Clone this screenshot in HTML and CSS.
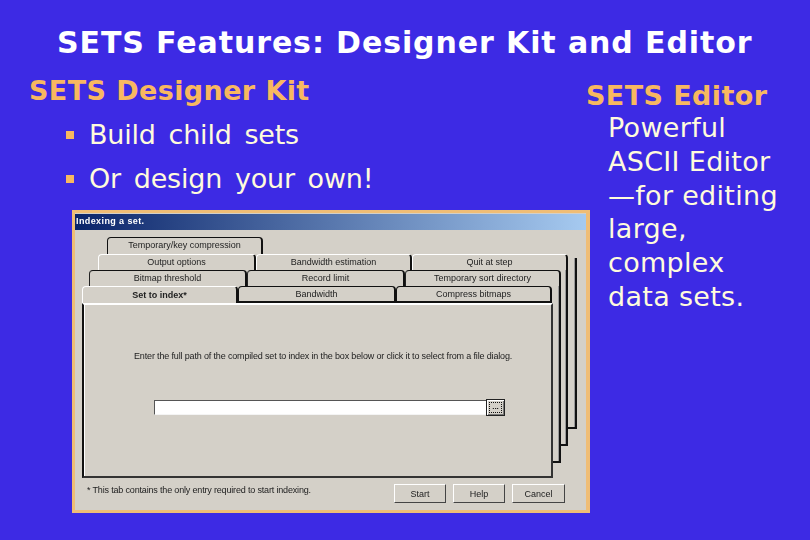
FILE: index.html
```html
<!DOCTYPE html>
<html lang="en">
<head>
<meta charset="utf-8">
<title>SETS Features</title>
<link rel="stylesheet" href="styles.css">
</head>
<body>
<main class="slide">
  <h1 class="title">SETS Features: Designer Kit and Editor</h1>
  <div class="columns">
    <section class="left">
      <h2 class="kit">SETS Designer Kit</h2>
      <ul class="bullets">
        <li>Build child sets</li>
        <li>Or design your own!</li>
      </ul>
      <div class="dialog">
        <div class="titlebar">Indexing a set.</div>
        <div class="client">
          <div class="stack">
            <div class="back b1"></div>
            <div class="back b2"></div>
            <div class="back b3"></div>
            <div class="row r1">
              <div class="tab w1">Temporary/key compression</div>
            </div>
            <div class="row r2">
              <div class="tab w2">Output options</div>
              <div class="tab w3">Bandwidth estimation</div>
              <div class="tab w3">Quit at step</div>
            </div>
            <div class="row r3">
              <div class="tab w2">Bitmap threshold</div>
              <div class="tab w4">Record limit</div>
              <div class="tab w3">Temporary sort directory</div>
            </div>
            <div class="row r4">
              <div class="tab active w3">Set to index*</div>
              <div class="tab w4">Bandwidth</div>
              <div class="tab w3">Compress bitmaps</div>
            </div>
            <div class="page">
              <p class="prompt">Enter the full path of the compiled set to index in the box below or click it to select from a file dialog.</p>
              <div class="pathrow">
                <div class="input"></div>
                <div class="browse"><span class="dots">...</span></div>
              </div>
            </div>
          </div>
          <div class="footer">
            <span class="note">* This tab contains the only entry required to start indexing.</span>
            <div class="buttons">
              <div class="btn">Start</div>
              <div class="btn">Help</div>
              <div class="btn wide">Cancel</div>
            </div>
          </div>
        </div>
      </div>
    </section>
    <section class="right">
      <h2 class="editor">SETS Editor</h2>
      <p class="desc">Powerful ASCII Editor —for editing large, complex data sets.</p>
    </section>
  </div>
</main>
</body>
</html>
```
FILE: styles.css
```css
* { box-sizing: border-box; }
html, body { margin: 0; padding: 0; }
body { width: 810px; height: 540px; overflow: hidden; background: #3d2ae4; }
.slide {
  width: 810px; height: 540px; padding-top: 23px;
  font-family: "DejaVu Sans", Verdana, sans-serif;
  color: #fffbdc;
}
.title {
  margin: 0 0 0 57px; font-size: 30px; line-height: 40px; font-weight: 700;
  color: #fff; white-space: nowrap; letter-spacing: 0.9px;
}
.columns { display: flex; margin-top: 6px; }
.left { width: 586px; flex: none; }
.kit {
  margin: 0 0 0 29px; font-size: 27px; line-height: 44px; font-weight: 700; color: #f8b860; white-space: nowrap; letter-spacing: 0.4px;
}
.bullets { list-style: none; margin: 0; padding: 0 0 0 66px; }
.bullets li {
  display: flex; align-items: center; font-size: 27px; line-height: 44px; letter-spacing: -0.2px; word-spacing: 4.4px; white-space: nowrap;
}
.bullets li::before {
  content: ""; width: 8px; height: 8px; margin-right: 15px; background: #f8b860;
}
.dialog {
  width: 518px; height: 303px; margin: 9px 0 0 72px;
  border: 3px solid #efbd76; border-right-width: 4px;
  background: #d4d0c8; color: #222;
  font-family: "Liberation Sans", Arial, sans-serif; font-size: 9px;
  display: flex; flex-direction: column;
  filter: blur(0.3px);
}
.titlebar {
  height: 16px; margin-top: 1px; padding-left: 1px; line-height: 15px; font-weight: 700; font-size: 9px; letter-spacing: 0.4px; color: #fff;
  background: linear-gradient(90deg, #0a246a, #a6caf0);
}
.client { flex: 1; padding: 7px 0 0 7px; display: flex; flex-direction: column; }
.stack { position: relative; width: 495px; }
.back {
  position: absolute; left: 100px; background: #d4d0c8;
  border-right: 2px solid #111; border-bottom: 2px solid #111;
  box-shadow: inset -1px 0 #999;
}
.b1 { width: 395px; top: 21px; height: 171px; }
.b2 { width: 386px; top: 33px; height: 176px; }
.b3 { width: 379px; top: 49px; height: 177px; }
.row { position: relative; display: flex; height: 16px; }
.r1 { margin-left: 25px; height: 17px; }
.r2 { margin-left: 16px; }
.r3 { margin-left: 7px; }
.r4 { height: 17px; }
.tab {
  flex: none; display: flex; justify-content: center; align-items: center;
  background: #d4d0c8; font-size: 9px; white-space: nowrap; padding-bottom: 2px;
  border-top: 1.5px solid #fff; border-left: 1.5px solid #fff; border-right: 2px solid #111;
  border-radius: 4px 4px 0 0;
}
.r1 .tab, .r3 .tab { border-top-color: #111; }
.r1 .tab { border-left-color: #111; }
.r3 .tab { border-left-color: #222; }
.r4 .tab { border-top-color: #111; border-left-color: #111; border-bottom: 2px solid #111; padding-bottom: 1px; }
.r4 .tab.active { border-top-color: #fff; border-left-color: #fff; border-bottom: 0; font-weight: 700; z-index: 2; }
.w1 { width: 156px; }
.w2 { width: 158px; }
.w3 { width: 156px; }
.w4 { width: 158px; }
.page {
  position: relative; width: 471px; height: 175px;
  background: #d4d0c8;
  border-left: 2px solid #111; border-top: 2px solid #fff; border-right: 2px solid #333; border-bottom: 2px solid #333;
  box-shadow: inset 1px 0 #fff;
  display: flex; flex-direction: column; align-items: flex-start;
}
.prompt { margin: 45px 0 0 50px; line-height: 12px; white-space: nowrap; letter-spacing: -0.155px; }
.pathrow { display: flex; align-items: center; margin: 37px 0 0 70px; }
.input {
  width: 332px; height: 15px; background: #fff;
  border-top: 1.5px solid #555; border-left: 1.5px solid #555; border-bottom: 1px solid #f4f4f4;
}
.browse {
  width: 19px; height: 17px; display: flex; align-items: center; justify-content: center;
  background: #d4d0c8; border: 1px solid #222; box-shadow: inset 1px 1px #fff, inset -1px -1px #777;
}
.dots {
  width: 13px; height: 11px; border: 1px dotted #111; font-size: 8px; font-weight: 700; line-height: 8px; text-align: center; color: #111;
}
.footer { display: flex; align-items: flex-start; height: 19px; margin-top: 6px; padding-left: 5px; }
.note { width: 307px; flex: none; white-space: nowrap; letter-spacing: -0.17px; margin-top: 1px; }
.buttons { display: flex; gap: 7px; }
.btn {
  width: 52px; height: 19px; display: flex; align-items: center; justify-content: center; font-size: 9px;
  background: #d4d0c8; border-top: 1px solid #fff; border-left: 1px solid #fff;
  border-right: 1.5px solid #444; border-bottom: 1.5px solid #444;
}
.btn.wide { width: 53px; }
.right { flex: 1; }
.editor {
  margin: 11px 0 0 0; font-size: 27px; line-height: 31px; font-weight: 700; color: #f8b860; white-space: nowrap; letter-spacing: 0.4px;
}
.desc {
  margin: 0 0 0 22px; width: 182px; font-size: 27px; line-height: 33.8px; letter-spacing: 0.3px;
}
```
